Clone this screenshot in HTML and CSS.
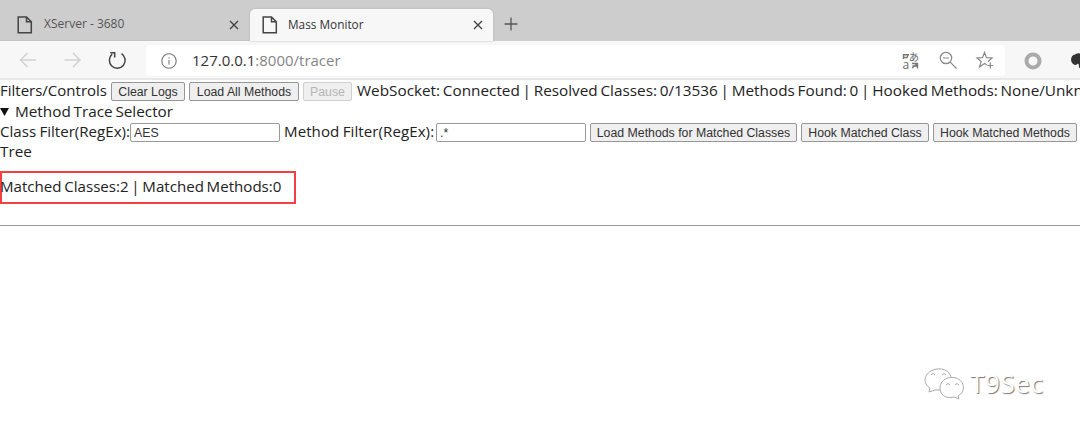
FILE: index.html
```html
<!DOCTYPE html>
<html lang="en">
<head>
<meta charset="utf-8">
<title>Mass Monitor</title>
<link rel="stylesheet" href="styles.css">
</head>
<body>
<header class="browser">
  <div class="tabs">
    <div class="tab">
      <svg class="doc" viewBox="0 0 16 18"><path d="M1.2 1H9.5L14.3 5.8V16.7H1.2Z M9.5 1V5.8H14.3"/></svg>
      <span class="title t1">XServer - 3680</span>
      <svg class="close" viewBox="0 0 10 10"><path d="M1 1L9 9M9 1L1 9"/></svg>
    </div>
    <div class="tab active">
      <svg class="doc" viewBox="0 0 16 18"><path d="M1.2 1H9.5L14.3 5.8V16.7H1.2Z M9.5 1V5.8H14.3"/></svg>
      <span class="title t2">Mass Monitor</span>
      <svg class="close" viewBox="0 0 10 10"><path d="M1 1L9 9M9 1L1 9"/></svg>
    </div>
    <svg class="plus" viewBox="0 0 14 14"><path d="M7 .5V13.5M.5 7H13.5"/></svg>
  </div>
  <div class="toolbar">
    <svg class="nav-icons" viewBox="0 0 146 37">
      <g class="faded"><path d="M36 19H20.5M27.5 12L20.5 19L27.5 26"/><path d="M64.500 19H80M73 12L80 19L73 26"/></g>
      <path class="reload" d="M121.500 12.600A7.900 7.900 0 1 1 112.200 13.200M110.300 11.800H114.700V16.500"/>
    </svg>
    <div class="address">
      <svg class="info" viewBox="0 0 16 16"><circle cx="8" cy="8" r="7.2"/><path d="M8 7V11.500M8 4.300V5.500"/></svg>
      <span class="url"><b>127.0.0.1</b>:8000/tracer</span>
      <svg class="actions" viewBox="0 0 105 31">
        <g class="translate"><path d="M3.500 9V14M3 9.800H9M3 12.500H7.500M7.500 9V12.500"/><path d="M12 18.500H17.500V23.500M12 23L17 19M12.500 21H17"/><text x="2.500" y="23.500">a</text><text class="kana" x="9" y="16">あ</text></g>
        <g class="line"><circle cx="46" cy="13" r="5.700"/><path d="M43 13H49M50.200 17.200L56.500 23.500"/>
        <path d="M87 20L84.500 18.500L79.500 22L81.200 16.500L77 13L82.500 12.700L84.500 7.500L86.500 12.700L92 13L88 16.700M90.300 17.500V23.500M87.300 20.500H93.300"/></g>
      </svg>
    </div>
    <svg class="extensions" viewBox="0 0 75 37"><circle class="ring" cx="28" cy="20" r="6.500"/><path class="elephant" d="M66 18.500Q66.500 14 70 13.500Q73 11.500 75 12.500V27Q73.500 27 74 24L73 22.500Q71 25 68 23Q66 21.500 66 18.500Z"/></svg>
  </div>
</header>
<main>
  <div class="row controls">
    <span class="text label-main">Filters/Controls</span>
    <button class="w-clear">Clear Logs</button>
    <button class="w-load">Load All Methods</button>
    <button class="w-pause" disabled>Pause</button>
    <span class="text status">WebSocket: Connected | Resolved Classes: 0/13536 | Methods Found: 0 | Hooked Methods: None/Unknown</span>
  </div>
  <div class="row summary"><svg class="triangle" viewBox="0 0 10 8"><path d="M0 0H9L4.500 8Z"/></svg><span class="text selector">Method Trace Selector</span></div>
  <div class="row filters">
    <span class="text class-label">Class Filter(RegEx):</span><input class="field" value="AES">
    <span class="text method-label">Method Filter(RegEx):</span><input class="field" value=".*">
    <button class="w-match">Load Methods for Matched Classes</button>
    <button class="w-class">Hook Matched Class</button>
    <button class="w-methods">Hook Matched Methods</button>
  </div>
  <div class="row tree"><span class="text">Tree</span></div>
  <div class="matches"><span class="text matched">Matched Classes:2 | Matched Methods:0</span></div>
  <div class="rule"></div>
</main>
<div class="watermark">
  <svg viewBox="0 0 42 36"><path class="bubble" d="M27 11C25 4 17 1 9 4C-1 8-1 18 6 22L5 26L11 24L16 24"/><path class="bubble" d="M16 21C17 13 25 10 32 12C41 15 42 26 34 30L35 33L30 31C21 33 16 29 16 21Z"/><path d="M7 9Q9 6 11 9M18 9Q20 6 22 9M22 19Q24 16 26 19M31 19Q33 16 35 19"/></svg>
  <span>T9Sec</span>
</div>
</body>
</html>
```
FILE: styles.css
```css
* { box-sizing: border-box; }
body { margin: 0; width: 1080px; height: 429px; overflow: hidden; position: relative; background: #fff; color: #222; font-family: "Open Sans", "Noto Sans", sans-serif; }
svg { display: block; fill: none; flex: none; }
.browser { height: 80px; background: #f7f7f7; border-bottom: 2px solid #e8e8e8; }
.tabs { display: flex; height: 41px; padding-top: 9px; background: #cdcdcd; }
.tab { display: flex; align-items: center; width: 250px; padding: 0 11px 0 17px; color: #555; border-bottom: 1px solid #c4c4c4; }
.tab.active { width: 243px; padding: 0 10px 0 12px; background: #f7f7f7; color: #333; border-bottom: 0; border-radius: 5px 5px 0 0; box-shadow: 0 0 2px #aaa; }
.doc { width: 16px; height: 18px; stroke: #444; stroke-width: 1.5; }
.title { margin-left: 10px; font-size: 12px; line-height: 16px; padding-bottom: 2px; white-space: nowrap; flex: 1; }
.t1 { margin-left: 11px; padding-bottom: 1px; }
.t2 { font-size: 11.8px; }
.close { width: 10px; height: 10px; stroke: #444; stroke-width: 1.4; }
.plus { width: 14px; height: 14px; margin: 8px 0 0 11px; stroke: #555; stroke-width: 1.3; }
.toolbar { display: flex; height: 37px; }
.nav-icons { width: 146px; height: 37px; stroke: #444; stroke-width: 1.5; }
.faded { stroke: #d2d2d2; }
.address { display: flex; align-items: center; width: 859px; height: 31px; margin-top: 4px; padding-left: 15px; background: #fff; border-radius: 4px; }
.info { width: 16px; height: 16px; stroke: #777; stroke-width: 1.1; }
.url { flex: 1; margin-left: 15px; font-size: 15px; line-height: 20px; padding-bottom: 1px; color: #858585; }
.url b { font-weight: 400; color: #333; }
.actions { width: 105px; height: 31px; }
.line { stroke: #888; stroke-width: 1.2; }
.translate { stroke: #777; stroke-width: 1.4; }
.translate text { stroke: none; fill: #666; font: 12px "Open Sans", sans-serif; }
.translate .kana { font: 10px "Noto Sans CJK JP", sans-serif; }
.extensions { width: 75px; height: 37px; }
.ring { stroke: #aaa; stroke-width: 4; }
.elephant { fill: #333; }
.row { display: flex; align-items: center; white-space: nowrap; }
.text { font-size: 15.3px; line-height: 20px; padding-bottom: 2px; word-spacing: -1.2px; white-space: nowrap; flex: none; }
button { flex: none; height: 19px; padding: 1px 0 0; border: 1px solid #969696; border-radius: 2px; background: #efefef; color: #333; font: 12.3px/16px "Liberation Sans", sans-serif; }
button:disabled { border-color: #d0d0d0; color: #b5b5b5; }
.controls { height: 22px; gap: 4px; }
.label-main { width: 107px; font-size: 15px; }
.w-clear { width: 74px; }
.w-load { width: 110px; }
.w-pause { width: 49px; }
.status { margin-left: 1px; }
.summary { height: 20px; }
.triangle { width: 10px; height: 8px; margin-right: 5px; fill: #111; }
.filters { height: 20px; }
.class-label { width: 130px; }
.class-label, .method-label { font-size: 15.1px; word-spacing: -.6px; }
.method-label { width: 152px; margin-left: 4px; letter-spacing: .06px; }
.field { width: 150px; height: 19px; padding: 1px 3px 0; border: 1px solid #999; border-radius: 2px; color: #333; background: #fff; font: 12.3px "Liberation Sans", sans-serif; flex: none; }
.w-match { width: 207px; margin-left: 4px; }
.w-class { width: 128px; margin-left: 4px; }
.w-methods { width: 144px; margin-left: 4px; }
.tree { height: 20px; }
.matches { display: flex; align-items: center; width: 296px; height: 33px; margin-top: 9px; border: 2px solid #f64040; }
.matched { margin-left: -2px; padding-bottom: 3px; font-size: 15.1px; }
.rule { height: 1px; margin-top: 21px; background: #999; }
.watermark { position: absolute; left: 924px; top: 364px; display: flex; align-items: center; color: #fff; }
.watermark svg { width: 42px; height: 36px; stroke: #aaa; stroke-width: 1; }
.watermark .bubble { fill: #fff; }
.watermark span { margin-left: 4px; font-size: 26px; letter-spacing: .6px; line-height: 38px; padding-bottom: 1px; text-shadow: 1px 1px 1px #777; }
```
